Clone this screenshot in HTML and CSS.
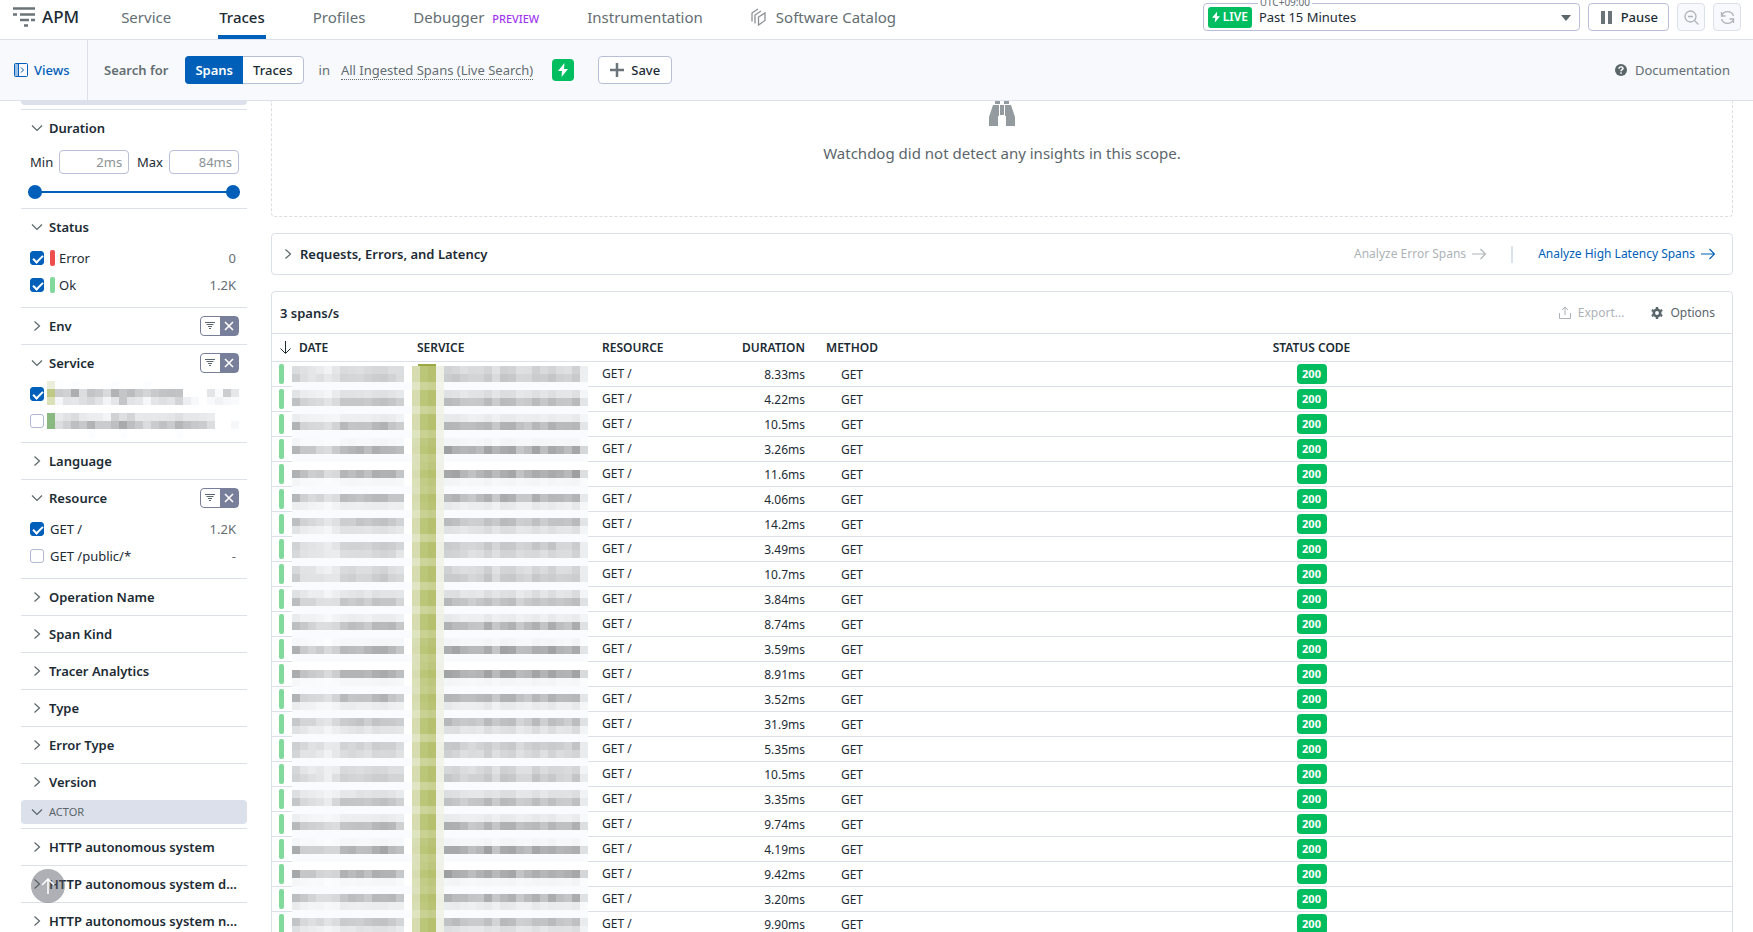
FILE: index.html
```html
<!DOCTYPE html>
<html lang="en">
  <head>
    <meta charset="utf-8">
    <title>APM Traces</title>
    <link rel="stylesheet" href="styles.css">
  </head>
  <body>
    <svg class="defs" aria-hidden="true">
      <symbol id="right" viewBox="0 0 12 12"><path d="M3.5 1.5 8.5 6l-5 4.500" fill="none" stroke="currentColor" stroke-width="1.200"/></symbol>
      <symbol id="down" viewBox="0 0 12 12"><path d="M1 3.500 6 8.500l5-5" fill="none" stroke="currentColor" stroke-width="1.200"/></symbol>
      <symbol id="arrow" viewBox="0 0 14 12"><path d="M0 6h13M8.500 1l5 5-5 5" fill="none" stroke="currentColor" stroke-width="1.200"/></symbol>
      <symbol id="bolt" viewBox="0 0 10 14"><path d="M6.500 0 0 8h4L3.500 14 10 6H6z" fill="currentColor"/></symbol>
      <symbol id="filter" viewBox="0 0 10 8"><path d="M0 .5h10M1.500 2.500h7M3 4.500h4M4 6.500h2" stroke="currentColor"/></symbol>
      <symbol id="cross" viewBox="0 0 10 10"><path d="m1 1 8 8M9 1 1 9" stroke="currentColor" stroke-width="1.600"/></symbol>
    </svg>

    <header class="topbar">
      <div class="brand">
        <svg width="22" height="20" viewBox="0 0 22 20"><path d="M0 1.500h22M0 7.500h4M7 7.500h15M7 13h9M18 13h4M11 18.500h4" stroke="#6b7478" stroke-width="2.500"/></svg>
        <span>APM</span>
      </div>
      <nav class="tabs">
        <a href="#">Service</a>
        <a href="#" class="active">Traces</a>
        <a href="#">Profiles</a>
        <a href="#">Debugger <small>PREVIEW</small></a>
        <a href="#">Instrumentation</a>
        <a href="#" class="catalog">
          <svg width="15" height="18" viewBox="0 0 15 18" fill="none" stroke="#8b9295" stroke-width="1.300"><path d="M1 13.500V5l6-4M4 15.500V7l6-4M7.500 17V9L14 5v7.500z"/></svg>
          Software Catalog
        </a>
      </nav>
      <div class="time">
        <label for="range">UTC+09:00</label>
        <span class="live"><svg width="8" height="12"><use href="#bolt"/></svg>LIVE</span>
        <select id="range"><option>Past 15 Minutes</option></select>
        <svg class="caret" width="10" height="6"><path d="M0 0h10L5 6z" fill="#5b666b"/></svg>
      </div>
      <button class="btn pause"><svg width="11" height="13"><path d="M0 0h4v13H0zM7 0h4v13H7z" fill="#6b7478"/></svg>Pause</button>
      <button class="btn square" aria-label="Zoom out"><svg width="15" height="15" viewBox="0 0 15 15" fill="none" stroke="#adb3b7" stroke-width="1.300"><circle cx="6.500" cy="6.500" r="5.500"/><path d="M4 6.500h5M10.500 10.500l4 4"/></svg></button>
      <button class="btn square" aria-label="Refresh"><svg width="15" height="15" viewBox="0 0 15 15" fill="none" stroke="#adb3b7" stroke-width="1.300"><path d="M1.500 2v4h4M1.500 6A6.300 6.300 0 0 1 13.500 6M13.500 13V9h-4M13.500 9A6.300 6.300 0 0 1 1.500 9"/></svg></button>
    </header>

    <div class="subbar">
      <button class="views"><svg width="14" height="14" viewBox="0 0 14 14" fill="none" stroke="#0060b9"><path fill="#9dc1e4" stroke="none" d="M1 1h3v12H1z"/><rect x=".5" y=".5" width="13" height="13" rx="1"/><path d="M4.500 1v12M7 4.500 9.500 7 7 9.500"/></svg>Views</button>
      <span class="search-for">Search for</span>
      <div class="segment"><button class="on">Spans</button><button>Traces</button></div>
      <span class="in">in</span>
      <a href="#" class="dotted">All Ingested Spans (Live Search)</a>
      <span class="green"><svg width="10" height="14"><use href="#bolt"/></svg></span>
      <button class="btn save"><svg width="14" height="14"><path d="M7 0v14M0 7h14" stroke="#6b7478" stroke-width="2.500"/></svg>Save</button>
      <a href="#" class="docs"><svg width="12" height="12" viewBox="0 0 12 12"><circle cx="6" cy="6" r="6" fill="#5b666b"/><path d="M4 4.700C4 2.300 8 2.300 8 4.500 8 5.800 6 5.700 6 7.200M6 8.300v1.500" fill="none" stroke="#fff" stroke-width="1.500"/></svg>Documentation</a>
    </div>

    <div class="page">
      <aside class="sidebar">
        <div class="group"></div>

        <section>
          <h3><svg><use href="#down"/></svg>Duration</h3>
          <div class="minmax">
            <label for="min">Min</label><input id="min" type="text" placeholder="2ms">
            <label for="max">Max</label><input id="max" type="text" placeholder="84ms">
          </div>
          <div class="slider">
            <input type="range" aria-label="Minimum duration" min="2" max="84" value="2">
            <input type="range" aria-label="Maximum duration" min="2" max="84" value="84">
          </div>
        </section>

        <section>
          <h3><svg><use href="#down"/></svg>Status</h3>
          <div class="values">
            <label><input type="checkbox" checked><i class="mark error"></i>Error<span>0</span></label>
            <label><input type="checkbox" checked><i class="mark"></i>Ok<span>1.2K</span></label>
          </div>
        </section>

        <section>
          <h3><svg><use href="#right"/></svg>Env<div class="scope"><button aria-label="Filter Env"><svg><use href="#filter"/></svg></button><button aria-label="Clear Env"><svg><use href="#cross"/></svg></button></div></h3>
        </section>

        <section>
          <h3><svg><use href="#down"/></svg>Service<div class="scope"><button aria-label="Filter Service"><svg><use href="#filter"/></svg></button><button aria-label="Clear Service"><svg><use href="#cross"/></svg></button></div></h3>
          <div class="values services">
            <label><input type="checkbox" aria-label="Service 1" checked></label>
            <label><input type="checkbox" aria-label="Service 2"></label>
            <canvas id="service-mosaic" width="192" height="56"></canvas>
          </div>
        </section>

        <section>
          <h3><svg><use href="#right"/></svg>Language</h3>
        </section>

        <section>
          <h3><svg><use href="#down"/></svg>Resource<div class="scope"><button aria-label="Filter Resource"><svg><use href="#filter"/></svg></button><button aria-label="Clear Resource"><svg><use href="#cross"/></svg></button></div></h3>
          <div class="values">
            <label><input type="checkbox" checked>GET /<span>1.2K</span></label>
            <label><input type="checkbox">GET /public/*<span>-</span></label>
          </div>
        </section>

        <section><h3><svg><use href="#right"/></svg>Operation Name</h3></section>
        <section><h3><svg><use href="#right"/></svg>Span Kind</h3></section>
        <section><h3><svg><use href="#right"/></svg>Tracer Analytics</h3></section>
        <section><h3><svg><use href="#right"/></svg>Type</h3></section>
        <section><h3><svg><use href="#right"/></svg>Error Type</h3></section>
        <section><h3><svg><use href="#right"/></svg>Version</h3></section>
        <div class="group"><svg><use href="#down"/></svg>ACTOR</div>
        <section><h3><svg><use href="#right"/></svg>HTTP autonomous system</h3></section>
        <section><h3><svg><use href="#right"/></svg>HTTP autonomous system d...</h3></section>
        <section><h3><svg><use href="#right"/></svg>HTTP autonomous system n...</h3></section>
      </aside>

      <main class="main">
        <div class="watchdog">
          <svg width="26" height="25" viewBox="0 0 26 25" fill="#939b9f"><path d="M6 0h5v3H6zM15 0h5v3h-5zM4 4h6v11H9v10H0v-9zM22 4h-6v11h1v10h9v-9zM11 4h4v10h-4z"/></svg>
          <p>Watchdog did not detect any insights in this scope.</p>
        </div>

        <div class="panel latency">
          <svg width="12" height="12"><use href="#right"/></svg>
          <h2>Requests, Errors, and Latency</h2>
          <a class="disabled">Analyze Error Spans<svg width="14" height="12"><use href="#arrow"/></svg></a>
          <i class="sep"></i>
          <a href="#">Analyze High Latency Spans<svg width="14" height="12"><use href="#arrow"/></svg></a>
        </div>

        <div class="panel spans">
          <div class="toolbar">
            <h2>3 spans/s</h2>
            <button disabled><svg width="12" height="13" viewBox="0 0 12 13" fill="none" stroke="currentColor"><path d="M.5 7v5.500h11V7M6 9V1M3 4l3-3 3 3"/></svg>Export...</button>
            <button><svg width="12" height="12" viewBox="0 0 12 12"><path fill="none" stroke="#5b666b" stroke-width="2.400" d="M6 0v2M6 10v2M.8 3l1.700 1M9.500 8l1.700 1M.8 9l1.700-1M9.500 4l1.700-1"/><circle cx="6" cy="6" r="3.200" fill="none" stroke="#5b666b" stroke-width="2.600"/></svg>Options</button>
          </div>
          <table>
            <colgroup><col class="c-bar"><col class="c-date"><col class="c-service"><col class="c-resource"><col class="c-duration"><col class="c-method"><col></colgroup>
            <thead>
              <tr><th><svg width="11" height="13" viewBox="0 0 11 13"><path d="M5.500 0v12M.5 7.500l5 5 5-5" fill="none" stroke="#1c2b34"/></svg></th><th>DATE</th><th>SERVICE</th><th>RESOURCE</th><th class="num">DURATION</th><th class="mid">METHOD</th><th class="mid">STATUS CODE</th></tr>
            </thead>
            <tbody>
              <tr><td><i></i></td><td></td><td></td><td>GET /</td><td>8.33ms</td><td>GET</td><td><b>200</b></td></tr>
              <tr><td><i></i></td><td></td><td></td><td>GET /</td><td>4.22ms</td><td>GET</td><td><b>200</b></td></tr>
              <tr><td><i></i></td><td></td><td></td><td>GET /</td><td>10.5ms</td><td>GET</td><td><b>200</b></td></tr>
              <tr><td><i></i></td><td></td><td></td><td>GET /</td><td>3.26ms</td><td>GET</td><td><b>200</b></td></tr>
              <tr><td><i></i></td><td></td><td></td><td>GET /</td><td>11.6ms</td><td>GET</td><td><b>200</b></td></tr>
              <tr><td><i></i></td><td></td><td></td><td>GET /</td><td>4.06ms</td><td>GET</td><td><b>200</b></td></tr>
              <tr><td><i></i></td><td></td><td></td><td>GET /</td><td>14.2ms</td><td>GET</td><td><b>200</b></td></tr>
              <tr><td><i></i></td><td></td><td></td><td>GET /</td><td>3.49ms</td><td>GET</td><td><b>200</b></td></tr>
              <tr><td><i></i></td><td></td><td></td><td>GET /</td><td>10.7ms</td><td>GET</td><td><b>200</b></td></tr>
              <tr><td><i></i></td><td></td><td></td><td>GET /</td><td>3.84ms</td><td>GET</td><td><b>200</b></td></tr>
              <tr><td><i></i></td><td></td><td></td><td>GET /</td><td>8.74ms</td><td>GET</td><td><b>200</b></td></tr>
              <tr><td><i></i></td><td></td><td></td><td>GET /</td><td>3.59ms</td><td>GET</td><td><b>200</b></td></tr>
              <tr><td><i></i></td><td></td><td></td><td>GET /</td><td>8.91ms</td><td>GET</td><td><b>200</b></td></tr>
              <tr><td><i></i></td><td></td><td></td><td>GET /</td><td>3.52ms</td><td>GET</td><td><b>200</b></td></tr>
              <tr><td><i></i></td><td></td><td></td><td>GET /</td><td>31.9ms</td><td>GET</td><td><b>200</b></td></tr>
              <tr><td><i></i></td><td></td><td></td><td>GET /</td><td>5.35ms</td><td>GET</td><td><b>200</b></td></tr>
              <tr><td><i></i></td><td></td><td></td><td>GET /</td><td>10.5ms</td><td>GET</td><td><b>200</b></td></tr>
              <tr><td><i></i></td><td></td><td></td><td>GET /</td><td>3.35ms</td><td>GET</td><td><b>200</b></td></tr>
              <tr><td><i></i></td><td></td><td></td><td>GET /</td><td>9.74ms</td><td>GET</td><td><b>200</b></td></tr>
              <tr><td><i></i></td><td></td><td></td><td>GET /</td><td>4.19ms</td><td>GET</td><td><b>200</b></td></tr>
              <tr><td><i></i></td><td></td><td></td><td>GET /</td><td>9.42ms</td><td>GET</td><td><b>200</b></td></tr>
              <tr><td><i></i></td><td></td><td></td><td>GET /</td><td>3.20ms</td><td>GET</td><td><b>200</b></td></tr>
              <tr><td><i></i></td><td></td><td></td><td>GET /</td><td>9.90ms</td><td>GET</td><td><b>200</b></td></tr>
            </tbody>
          </table>
          <canvas id="table-mosaic" width="296" height="570"></canvas>
        </div>
      </main>
    </div>

    <button class="to-top" aria-label="Back to top"><svg width="14" height="16" viewBox="0 0 14 16"><path d="M7 16V1M1 7l6-6 6 6" fill="none" stroke="#fff" stroke-width="1.500"/></svg></button>
    <script src="mosaic.js"></script>
  </body>
</html>
```

FILE: styles.css
```css
* { box-sizing: border-box; }
body { margin: 0; height: 100vh; display: flex; flex-direction: column; overflow: hidden; font: 13px/18px "Noto Sans", sans-serif; color: #1c2b34; background: #fff; }
button, input, select { font: inherit; color: inherit; }
button { display: flex; align-items: center; padding: 0; border: 0; background: none; white-space: nowrap; }
a { color: inherit; text-decoration: none; white-space: nowrap; }
svg { flex: none; }
h2, h3, p { margin: 0; font-size: 13px; font-weight: 600; }
.defs { position: absolute; width: 0; height: 0; }

.btn { height: 28px; border: 1px solid #b9bfd9; border-radius: 4px; background: #fff; }

/* top navigation */
.topbar { flex: none; display: flex; align-items: flex-start; height: 40px; padding: 3px 12px 0 13px; border-bottom: 1px solid #dce0ea; }
.brand { display: flex; align-items: center; gap: 7px; height: 28px; font-size: 17px; font-weight: 500; }
.tabs { display: flex; gap: 46px; margin: 0 auto 0 41px; font-size: 15px; color: #646e73; }
.tabs a { height: 36px; line-height: 28px; padding: 0 1px; }
.tabs .active { color: #1c2b34; font-weight: 500; border-bottom: 4px solid #0060b9; }
.tabs small { margin-left: 4px; font-size: 11px; font-weight: 500; color: #a036f0; }
.tabs .catalog { display: flex; align-items: center; gap: 10px; height: 28px; }
.time { position: relative; display: flex; align-items: center; width: 377px; height: 28px; margin-right: 8px; padding-left: 4px; border: 1px solid #b9bfd9; border-radius: 4px; }
.time label { position: absolute; left: 54px; top: -9px; padding: 0 2px; font-size: 10px; line-height: 14px; color: #646e73; background: #fff; }
.time select { flex: 1; height: 26px; padding: 0 20px 0 7px; border: 0; background: none; appearance: none; }
.time .caret { position: absolute; right: 8px; top: 11px; }
.live { display: flex; align-items: center; gap: 3px; height: 21px; padding: 0 4px; border-radius: 3px; font-size: 12px; font-weight: 600; color: #fff; background: #00bd60; }
.pause { gap: 9px; padding: 0 10px 0 12px; margin-right: 8px; font-weight: 500; }
.square { width: 28px; justify-content: center; border-color: #dce0ea; background: #f8f9fc; }
.square + .square { margin-left: 8px; }

/* search bar */
.subbar { flex: none; display: flex; align-items: center; height: 61px; padding-right: 23px; color: #646e73; background: #f8f9fc; border-bottom: 1px solid #dce0ea; }
.views { gap: 6px; align-self: stretch; width: 88px; padding-left: 14px; color: #0060b9; font-weight: 500; border-right: 1px solid #dce0ea; }
.search-for { margin: 0 17px 0 16px; font-weight: 600; }
.segment { display: flex; height: 28px; border: 1px solid #b9bfd9; border-radius: 4px; background: #fff; }
.segment button { padding: 0 10px; color: #1c2b34; font-weight: 500; }
.segment .on { margin: -1px 0 -1px -1px; color: #fff; font-weight: 600; background: #0060b9; border-radius: 4px 0 0 4px; }
.in { margin: 0 11px 0 15px; }
.dotted { border-bottom: 1px dotted #646e73; }
.green { display: flex; align-items: center; justify-content: center; width: 22px; height: 22px; margin: 0 24px 0 19px; border-radius: 4px; color: #fff; background: #00bd60; }
.save { gap: 7px; padding: 0 11px; color: #1c2b34; font-weight: 500; }
.docs { display: flex; align-items: center; gap: 8px; margin-left: auto; }

.page { flex: 1; min-height: 0; display: flex; gap: 24px; padding: 0 20px 0 21px; overflow: hidden; }

/* facets */
.sidebar { flex: none; width: 226px; margin-top: -20px; }
.sidebar svg { width: 12px; height: 12px; color: #5b666b; }
.group { display: flex; align-items: center; gap: 6px; height: 24px; margin-bottom: 4px; padding-left: 10px; border-radius: 4px; font-size: 11px; color: #5b666b; background: #dce0ea; }
section { border-top: 1px solid #dce0ea; }
h3 { display: flex; align-items: center; gap: 6px; height: 36px; padding: 0 8px 0 10px; white-space: nowrap; }
.scope { display: flex; width: 39px; height: 20px; margin-left: auto; border: 1px solid #787f9b; border-radius: 4px; }
.scope button { flex: 1; justify-content: center; }
.scope button + button { background: #787f9b; }
.scope svg { width: 10px; height: 8px; }
.scope button + button svg { color: #fff; height: 10px; }
.minmax { display: flex; align-items: center; padding: 4px 8px 0 9px; }
.minmax input { width: 70px; height: 24px; margin: 0 auto 0 6px; padding: 0 6px; border: 1px solid #b9bfd9; border-radius: 4px; text-align: right; }
.minmax input:last-child { margin-right: 0; }
.minmax input::placeholder { color: #8b9295; }
.slider { display: grid; height: 34px; padding: 2px 7px 0; align-items: center; }
.slider input { grid-area: 1 / 1; height: 14px; margin: 0; width: 100%; appearance: none; background: linear-gradient(#0060b9, #0060b9) center / 100% 2px no-repeat; pointer-events: none; }
.slider input::-webkit-slider-thumb { appearance: none; width: 14px; height: 14px; border-radius: 50%; background: #0060b9; pointer-events: auto; }
.values { margin-top: -1px; padding-bottom: 9px; }
.values label { display: flex; align-items: center; height: 27px; padding: 0 11px 0 9px; }
.values input { position: relative; width: 14px; height: 14px; margin: 0 6px 0 0; appearance: none; border: 1px solid #b1b8d3; border-radius: 3px; }
.values input:checked { border-color: #0060b9; background: #0060b9; }
.values input:checked::before { content: ""; position: absolute; left: 4px; top: 1px; width: 4px; height: 8px; border: solid #fff; border-width: 0 2px 2px 0; transform: rotate(45deg); }
.values span { margin-left: auto; color: #646e73; }
.mark { width: 5px; height: 16px; margin-right: 4px; border-radius: 2px; background: #81da9c; }
.mark.error { background: #ef4e4e; }
.services { position: relative; padding-bottom: 8px; }
.services canvas { position: absolute; left: 26px; top: 1px; }

/* content */
.main { flex: 1; min-width: 0; }
.watchdog { height: 116px; text-align: center; border: 1px dashed #dcdde2; border-top: 0; border-radius: 0 0 4px 4px; }
.watchdog svg { display: block; margin: 0 auto 18px; }
.watchdog p { font-size: 15px; font-weight: 400; color: #5b666b; }
.panel { margin-top: 16px; border: 1px solid #dce0ea; border-radius: 4px; }
.latency { display: flex; align-items: center; height: 42px; padding: 0 17px 0 10px; font-size: 12px; }
.latency > svg { margin-right: 6px; color: #5b666b; }
.latency h2 { margin-right: auto; }
.latency a { display: flex; align-items: center; gap: 6px; color: #0060b9; }
.latency .disabled { color: #adb3b7; }
.sep { width: 2px; height: 17px; margin: 0 25px; background: #dce0ea; }
.spans { position: relative; }
.toolbar { display: flex; align-items: center; gap: 27px; height: 41px; padding: 0 17px 0 8px; font-size: 12px; }
.toolbar h2 { margin-right: auto; }
.toolbar button { gap: 7px; color: #5b666b; }
.toolbar button:disabled { color: #adb3b7; }

table { width: 100%; table-layout: fixed; border-collapse: separate; border-spacing: 0; font-size: 12px; line-height: 16px; border-top: 1px solid #dce0ea; }
.c-bar { width: 19px; }
.c-date { width: 118px; }
.c-service { width: 185px; }
.c-resource { width: 106px; }
.c-duration { width: 113px; }
.c-method { width: 78px; }
th { height: 28px; padding: 0 8px; font-weight: 600; text-align: left; border-bottom: 1px solid #dce0ea; white-space: nowrap; }
th svg { display: block; }
th.num { text-align: right; }
th.mid { text-align: center; }
td { height: 25px; padding: 0 8px; border-bottom: 1px solid #dce0ea; }
td:first-child { padding: 0 7px; }
td:nth-child(5), td:nth-child(6) { padding-top: 2px; }
td:nth-child(5) { text-align: right; }
td:nth-child(6), td:nth-child(7) { text-align: center; }
td i { display: block; width: 5px; height: 20px; border-radius: 2px; background: #81da9c; }
td b { display: block; width: 30px; margin: 0 auto; border-radius: 4px; font-size: 11px; line-height: 20px; font-weight: 700; color: #fff; background: #00bd60; }
#table-mosaic { position: absolute; left: 20px; top: 72px; }

.to-top { position: fixed; left: 31px; bottom: 29px; width: 34px; height: 34px; justify-content: center; border-radius: 50%; background: rgba(88, 89, 100, .48); }
```

FILE: mosaic.js
```js
// redacts the date and service columns with 8px blocks
var SIZE = 8;

function overlap(a, b, c, d) {
  return Math.max(0, Math.min(b, d) - Math.max(a, c));
}
function gray(g) {
  return 'rgb(' + (g - 1) + ',' + (g + 1) + ',' + (g + 2) + ')';
}

function drawTable() {
  var ctx = document.getElementById('table-mosaic').getContext('2d');
  var date = [174, 197, 204, 209, 220, 208, 182, 182, 182, 186, 176, 172, 180, 192];
  var service = [165, 170, 182, 185, 182, 164, 188, 166, 168, 189, 184, 166, 182, 166, 180, 182, 165, 220];
  var olive = [[214, 220, 176], [187, 198, 120], [182, 192, 110], [238, 240, 230]];

  // top of the first service icon
  ctx.fillStyle = '#9ba844';
  ctx.fillRect(126, 0, 18, 2);

  for (var row = 0; row < 71; row++) {
    var top = 4 + row * SIZE;
    var ink = 0, icon = 0, line = 0;
    for (var i = 0; i < 24; i++) {
      ink += overlap(top, top + SIZE, 8 + i * 25, 17 + i * 25) / SIZE;
      icon += overlap(top, top + SIZE, 2 + i * 25, 22 + i * 25) / SIZE;
      line += overlap(top, top + SIZE, 24 + i * 25, 25 + i * 25);
    }
    for (var col = 0; col < 37; col++) {
      var x = col * SIZE;
      ctx.fillStyle = line ? '#fafbfe' : '#fff';
      if (col > 14 && col < 19) {
        var c = olive[col - 15];
        var a = 0.6 + 0.4 * icon;
        ctx.fillStyle = 'rgb(' + c.map(function (v) { return Math.round(255 - (255 - v) * a); }).join() + ')';
      } else if (ink && col != 14) {
        var base = col < 14 ? date[col] : service[col - 19];
        var noise = (row * 7 + col * 13 + row * col) % 17 - 8;
        ctx.fillStyle = gray(Math.min(253, Math.round(255 - (255 - base + noise) * ink)));
      }
      ctx.fillRect(x, top - 2, SIZE, SIZE);
    }
  }
}

function drawServices() {
  var ctx = document.getElementById('service-mosaic').getContext('2d');
  var rows = [
    [0, [0, 253, 0, 252, 0, 0, 0, 0, 252, 0, 0, 0, 252]],
    [8, [0, 203, 208, 173, 220, 195, 201, 217, 178, 196, 187, 203, 212, 201, 194, 192, 194, 0, 0, 0, 228, 250, 204, 230]],
    [16, [0, 245, 227, 230, 222, 215, 226, 243, 229, 196, 226, 230, 246, 228, 222, 227, 211, 237, 247, 0, 248, 241, 246, 249]],
    [32, [0, 232, 225, 218, 232, 236, 236, 243, 208, 222, 211, 231, 230, 231, 230, 228, 222, 230, 230, 232, 235]],
    [40, [0, 220, 208, 189, 199, 178, 202, 202, 190, 169, 189, 201, 219, 202, 192, 202, 181, 192, 199, 203, 220, 0, 0, 246]],
    [48, [0, 0, 0, 0, 0, 252, 0, 0, 0, 252, 0, 0, 0, 0, 0, 0, 252]]
  ];
  rows.forEach(function (r) {
    r[1].forEach(function (g, i) {
      if (!g) return;
      ctx.fillStyle = gray(g);
      ctx.fillRect(i * SIZE, r[0], SIZE, SIZE);
    });
  });
  ['#eaeedb', '#bfc884', '#dae1b8'].forEach(function (c, i) {
    ctx.fillStyle = c;
    ctx.fillRect(0, i * SIZE, SIZE, SIZE);
  });
  ctx.fillStyle = '#8ab881';
  ctx.fillRect(0, 32, SIZE, 16);
}

drawTable();
drawServices();
```
